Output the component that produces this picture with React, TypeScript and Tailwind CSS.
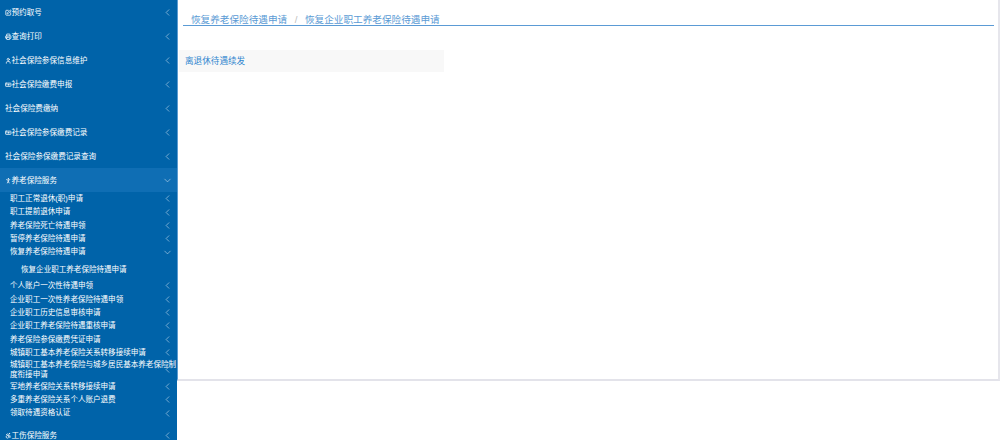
import React from "react";
import { ChevronLeft, ChevronDown, SquarePen, Printer, User, Banknote, Accessibility, PersonStanding } from "lucide-react";

const font = "font-['Liberation_Sans','Noto_Sans_CJK_SC',sans-serif]";

function Chev({ open }: { open?: boolean }) {
  return open ? (
    <ChevronDown size={11} strokeWidth={1.2} className="shrink-0 -mr-[2px] text-[#d5e6f3]" />
  ) : (
    <ChevronLeft size={11} strokeWidth={1.2} className="shrink-0 -mr-[2px] text-[#d5e6f3]" />
  );
}

function Top({ icon, label, open, last }: { icon?: React.ReactNode; label: string; open?: boolean; last?: boolean }) {
  return (
    <div className={`${last ? "h-[10px]" : "h-6"} pl-[5px] pr-[6px] flex items-center justify-between text-[7.6px] text-white ${open ? "bg-[#0f6eb4]" : ""}`}>
      <span className="flex items-center whitespace-nowrap pt-[1px]">
        {icon}
        {label}
      </span>
      <Chev open={open} />
    </div>
  );
}

function Sub({ label, open }: { label: string; open?: boolean }) {
  return (
    <div className="h-[13.35px] pl-[10px] pr-[6px] flex items-center justify-between text-[7.55px] text-white">
      <span className="whitespace-nowrap">{label}</span>
      <Chev open={open} />
    </div>
  );
}

const ic = "shrink-0 w-[6.5px] h-[7.5px]";
const sw = 2.8;

export default function App() {
  return (
    <div className={`w-[1000px] h-[440px] overflow-hidden flex bg-white ${font}`}>
      <aside className="w-[177px] h-[440px] shrink-0 bg-[#0063a9] overflow-hidden">
        <Top icon={<SquarePen className={ic} strokeWidth={sw} />} label="预约取号" />
        <Top icon={<Printer className={ic} strokeWidth={sw} />} label="查询打印" />
        <Top icon={<User className={ic} strokeWidth={sw} />} label="社会保险参保信息维护" />
        <Top icon={<Banknote className={ic} strokeWidth={sw} />} label="社会保险缴费申报" />
        <Top label="社会保险费缴纳" />
        <Top icon={<Banknote className={ic} strokeWidth={sw} />} label="社会保险参保缴费记录" />
        <Top label="社会保险参保缴费记录查询" />
        <Top icon={<PersonStanding className={ic} strokeWidth={sw} />} label="养老保险服务" open />
        <div>
          <Sub label="职工正常退休(职)申请" />
          <Sub label="职工提前退休申请" />
          <Sub label="养老保险死亡待遇申领" />
          <Sub label="暂停养老保险待遇申请" />
          <Sub label="恢复养老保险待遇申请" open />
          <div className="h-[20.5px] pl-[21px] pt-[1.5px] flex items-center text-[7.55px] text-white whitespace-nowrap">恢复企业职工养老保险待遇申请</div>
          <Sub label="个人账户一次性待遇申领" />
          <Sub label="企业职工一次性养老保险待遇申领" />
          <Sub label="企业职工历史信息审核申请" />
          <Sub label="企业职工养老保险待遇重核申请" />
          <Sub label="养老保险参保缴费凭证申请" />
          <Sub label="城镇职工基本养老保险关系转移接续申请" />
          <div className="relative h-[20.5px] pl-[10px] text-[7.55px] leading-[9.5px] text-white flex items-center">
            <span>城镇职工基本养老保险与城乡居民基本养老保险制度衔接申请</span>
            <ChevronLeft size={11} strokeWidth={1.2} className="absolute right-[4px] top-[5px] text-[#d5e6f3]" />
          </div>
          <Sub label="军地养老保险关系转移接续申请" />
          <Sub label="多重养老保险关系个人账户退费" />
          <Sub label="领取待遇资格认证" />
        </div>
        <div className="h-[10.5px]" />
        <Top icon={<Accessibility className={ic} strokeWidth={sw} />} label="工伤保险服务" last />
      </aside>
      <main className="flex-1 h-[381px] border-l border-l-[#5b9bd1] border-r-2 border-r-[#e6e6ec] border-b-2 border-b-[#e3e3ea]">
        <div className="mt-[13px] ml-[5px] mr-[4px] h-[13px] border-b border-[#5b9bd5] pl-[8px] text-[9.65px] leading-[13px] text-[#5b9bd5] whitespace-nowrap">
          <span>恢复养老保险待遇申请</span>
          <span className="text-[#bbb] mx-[7.5px]">/</span>
          <span>恢复企业职工养老保险待遇申请</span>
        </div>
        <div className="mt-[24px] ml-[1px] w-[265px] h-[22px] bg-[#f8f8f8] pl-[6px] flex items-center text-[8.6px] text-[#2f86cf]">离退休待遇续发</div>
      </main>
    </div>
  );
}
